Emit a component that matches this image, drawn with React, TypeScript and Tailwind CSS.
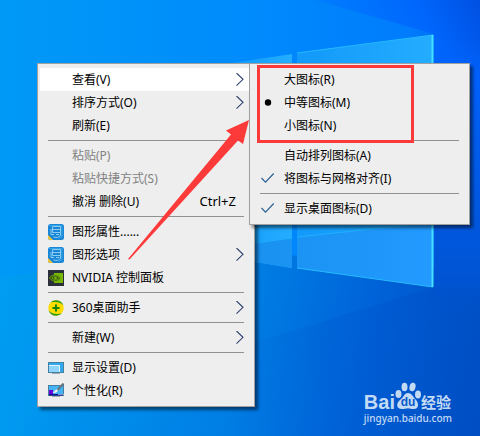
import React from "react";

type Mark = "dot" | "check";
type Entry = {
  label: string;
  icon?: React.ReactNode;
  mark?: Mark;
  shortcut?: string;
  arrow?: boolean;
  disabled?: boolean;
  active?: boolean;
};

function GraphicsIcon() {
  return (
    <svg viewBox="0 0 16 16" className="size-4" aria-hidden="true">
      <rect width="16" height="16" rx="2.5" fill="#1a86d6" />
      <path d="M0 11l5 5H2.500A2.500 2.500 0 0 1 0 13.500z" fill="#f3c433" />
      <path d="M1 1.500h13v11l-3 2" fill="none" stroke="#36a5e8" strokeWidth="1" />
      <path
        d="M4.500 2.500h8v6h-8zM4.500 5.500h8M3 5v5.500h3M12.500 8.500v3l-3 2-4-.5M8 10.500h3"
        fill="none"
        stroke="#9ad4f5"
        strokeWidth="0.9"
      />
    </svg>
  );
}

function NvidiaIcon() {
  return (
    <svg viewBox="0 0 16 16" className="size-4" aria-hidden="true">
      <rect width="16" height="16" fill="#2b303a" />
      <path d="M6 3h9v10H6z" fill="#76b900" />
      <path d="M1.500 8C4 4 9 3.500 13 8 9.500 12.500 4.500 12 1.500 8z" fill="#35501a" stroke="#76b900" strokeWidth="0.8" />
      <path d="M4 8c1.500-3 5-3 7.500 0C9 10.500 6 10.500 4 8z" fill="none" stroke="#76b900" strokeWidth="0.9" />
      <circle cx="7.500" cy="8" r="1.300" fill="#76b900" />
    </svg>
  );
}

function AssistantIcon() {
  return (
    <svg viewBox="0 0 16 16" className="size-4" aria-hidden="true">
      <circle cx="8" cy="8" r="7.700" fill="#ffdc00" />
      <path d="M2.500 2.500C6-.8 13-.8 15.500 5.500 12 2 7.500 1.500 2.500 2.500zM13.500 13.500C10 16.800 3 16.800.5 10.500 4 14 8.500 14.500 13.500 13.500z" fill="#2f9e1b" />
      <path d="M8 4.500v7M4.500 8h7" stroke="#16840f" strokeWidth="2" />
    </svg>
  );
}

function DisplayIcon() {
  return (
    <svg viewBox="0 0 16 16" className="size-4" aria-hidden="true">
      <rect x=".5" y="2.500" width="15" height="10" fill="#35a7ee" stroke="#477f9f" />
      <path d="M1 5h11v7H1z" fill="#8fd5ff" />
      <path d="M1 5.500h10.500V12" fill="none" stroke="#e2f6ff" />
      <path d="M4 13.500h8" stroke="#9aa9b2" />
    </svg>
  );
}

function PersonalizeIcon() {
  return (
    <svg viewBox="0 0 16 16" className="size-4" aria-hidden="true">
      <rect x=".5" y="2.500" width="15" height="10" fill="#43b4f3" stroke="#477f9f" />
      <path d="M1 7h4v5H1z" fill="#6a00df" />
      <path d="M1 11h14v1.500H1z" fill="#17128b" />
      <path d="M10.500 11.500h1m1 0h1m1 0h1" stroke="#fff" />
      <path d="M4 13.500h8" stroke="#9aa9b2" />
      <path d="M15.500.5L9 7.500" stroke="#65717b" strokeWidth="2" />
      <path d="M9.500 6.500c1 1.500 0 3.500-5 3.500 2-1 2-4 5-3.500z" fill="#e8eef2" />
    </svg>
  );
}

function MarkIcon({ mark }: { mark: Mark }) {
  return (
    <svg viewBox="0 0 16 16" className="size-4" aria-hidden="true">
      {mark === "dot" ? (
        <circle cx="8" cy="7.500" r="3.200" fill="#000" />
      ) : (
        <path d="M1.500 7l4 4.200L13.700 2.500" fill="none" stroke="#245c94" strokeWidth="1.100" />
      )}
    </svg>
  );
}

function Chevron() {
  return (
    <svg viewBox="0 0 8 14" className="h-3.5 w-2 shrink-0" fill="none" aria-hidden="true">
      <path d="M.5 0L7 6.300.5 12.600" stroke="#2c3f70" strokeWidth="1.100" />
    </svg>
  );
}

const mainGroups: Entry[][] = [
  [
    { label: "查看(V)", arrow: true, active: true },
    { label: "排序方式(O)", arrow: true },
    { label: "刷新(E)" },
  ],
  [
    { label: "粘贴(P)", disabled: true },
    { label: "粘贴快捷方式(S)", disabled: true },
    { label: "撤消 删除(U)", shortcut: "Ctrl+Z" },
  ],
  [
    { label: "图形属性......", icon: <GraphicsIcon /> },
    { label: "图形选项", icon: <GraphicsIcon />, arrow: true },
    { label: "NVIDIA 控制面板", icon: <NvidiaIcon /> },
  ],
  [{ label: "360桌面助手", icon: <AssistantIcon />, arrow: true }],
  [{ label: "新建(W)", arrow: true }],
  [
    { label: "显示设置(D)", icon: <DisplayIcon /> },
    { label: "个性化(R)", icon: <PersonalizeIcon /> },
  ],
];

const viewGroups: Entry[][] = [
  [{ label: "大图标(R)" }, { label: "中等图标(M)", mark: "dot" }, { label: "小图标(N)" }],
  [{ label: "自动排列图标(A)" }, { label: "将图标与网格对齐(I)", mark: "check" }],
  [{ label: "显示桌面图标(D)", mark: "check" }],
];

function Menu({ groups, label, className }: { groups: Entry[][]; label: string; className: string }) {
  return (
    <div
      role="menu"
      aria-label={label}
      className={`absolute border border-[#a0a0a0] bg-[#eeeeee] px-0.5 py-1 shadow-[3px_3px_3px_rgba(0,0,0,0.5)] ${className}`}
    >
      {groups.map((group, i) => (
        <React.Fragment key={i}>
          {i > 0 && <div role="separator" className="mx-2 my-[3px] h-px bg-[#919191]" />}
          {group.map((item) => (
            <button
              key={item.label}
              type="button"
              role="menuitem"
              disabled={item.disabled}
              className={`flex h-[23px] w-full items-center px-2 text-left text-xs ${
                item.active ? "bg-white" : ""
              } ${item.disabled ? "text-[#828282]" : "text-black"}`}
            >
              <span className="mr-2 size-4 shrink-0">
                {item.icon}
                {item.mark && <MarkIcon mark={item.mark} />}
              </span>
              <span className="flex-1 whitespace-nowrap">{item.label}</span>
              {item.shortcut && <span className="mr-2 text-[13px]">{item.shortcut}</span>}
              {item.arrow && <Chevron />}
            </button>
          ))}
        </React.Fragment>
      ))}
    </div>
  );
}

function Wallpaper() {
  return (
    <svg
      viewBox="0 0 480 436"
      preserveAspectRatio="none"
      className="absolute inset-0 h-full w-full"
      aria-hidden="true"
    >
      <defs>
        <linearGradient id="base" x1="0" y1="0" x2="1" y2="0">
          <stop offset="0" stopColor="#0099f6" />
          <stop offset="0.5" stopColor="#008cfc" />
          <stop offset="0.85" stopColor="#007cfc" />
          <stop offset="1" stopColor="#0060f0" />
        </linearGradient>
        <linearGradient id="low" gradientUnits="userSpaceOnUse" x1="0" y1="300" x2="480" y2="400">
          <stop offset="0" stopColor="#009df2" />
          <stop offset="0.5" stopColor="#007ee4" />
          <stop offset="0.75" stopColor="#0062d8" />
          <stop offset="1" stopColor="#004cc0" />
        </linearGradient>
        <linearGradient id="corner" gradientUnits="userSpaceOnUse" x1="350" y1="60" x2="480" y2="0">
          <stop offset="0" stopColor="#007cff" />
          <stop offset="0.6" stopColor="#0066fc" />
          <stop offset="1" stopColor="#0050e2" />
        </linearGradient>
        <linearGradient id="side" x1="0" y1="0" x2="0" y2="1">
          <stop offset="0" stopColor="#0062fc" stopOpacity="0" />
          <stop offset="0.15" stopColor="#0060fa" />
          <stop offset="0.85" stopColor="#0054d4" />
          <stop offset="1" stopColor="#0054d0" stopOpacity="0" />
        </linearGradient>
        <linearGradient id="beam" gradientUnits="userSpaceOnUse" x1="434" y1="300" x2="220" y2="390">
          <stop offset="0" stopColor="#0050c8" stopOpacity="0.45" />
          <stop offset="1" stopColor="#0058d0" stopOpacity="0" />
        </linearGradient>
        <linearGradient id="pane" x1="0" y1="0" x2="1" y2="0">
          <stop offset="0" stopColor="#1299fa" />
          <stop offset="1" stopColor="#24adff" />
        </linearGradient>
        <linearGradient id="lowPane" x1="0" y1="0" x2="1" y2="0">
          <stop offset="0" stopColor="#1790ee" />
          <stop offset="1" stopColor="#229aff" />
        </linearGradient>
      </defs>
      <rect width="480" height="436" fill="url(#base)" />
      <path d="M0 277L225 250 480 270V436H0z" fill="url(#low)" />
      <path d="M315 0H480V80H434V34z" fill="url(#corner)" />
      <path d="M434 40H480V320H434z" fill="url(#side)" />
      <path d="M434 287L240 347 80 436H480V287z" fill="url(#beam)" />
      <path d="M225 64L292 54V268L225 257z" fill="url(#pane)" />
      <path d="M297 53L433 35V287L297 268z" fill="url(#pane)" />
      <path d="M225 246L292 238V268L225 257zM297 237L410 225H433V287L297 268z" fill="url(#lowPane)" />
      <path d="M255 243L292 238M297 237L410 225" stroke="#1fb0ff" strokeWidth="1" />
      <path d="M297 53L433 35M297 268L433 287" fill="none" stroke="#25baff" strokeWidth="1" />
      <path d="M432.500 35V287" stroke="#45dfff" strokeWidth="2" />
    </svg>
  );
}

function Annotation() {
  return (
    <>
      <div className="pointer-events-none absolute left-[257px] top-[65px] h-[78px] w-[157px] border-3 border-[#fd3a3a]" />
      <svg
        width="121"
        height="140"
        viewBox="128 120 121 140"
        className="pointer-events-none absolute left-[128px] top-[120px]"
        aria-hidden="true"
      >
        <path d="M249 120L226 130.500 231 134.500 128 259 129.500 259.500 238 140.500 243 144z" fill="#fd3a3a" />
      </svg>
    </>
  );
}

function Watermark() {
  return (
    <div className="absolute bottom-2.5 right-7 flex flex-col text-[#c3daf5]">
      <div className="flex items-end">
        <span className="font-['Liberation_Sans',sans-serif] text-xl font-bold leading-4">Bai</span>
        <svg viewBox="0 0 26 28" className="h-7 w-[26px]" aria-hidden="true">
          <g fill="currentColor">
            <ellipse cx="3.500" cy="12" rx="3" ry="4" />
            <ellipse cx="9.500" cy="5" rx="3" ry="4.300" />
            <ellipse cx="17.500" cy="5" rx="3" ry="4.300" transform="rotate(12 17.5 5)" />
            <ellipse cx="23" cy="12.500" rx="3" ry="4" />
            <path d="M13 11c4 0 5 4 8 7s3 9-2 9c-3 0-4-.8-6-.8S9 27 7 27c-6 0-6-6-2-9s4-7 8-7z" />
          </g>
          <text
            x="13"
            y="24"
            textAnchor="middle"
            fill="#0759ca"
            fontFamily="Liberation Sans, sans-serif"
            fontSize="12"
            fontWeight="700"
          >
            du
          </text>
        </svg>
        <span className="text-[15px] font-bold leading-4">经验</span>
      </div>
      <span className="text-[10px] font-medium leading-4">jingyan.baidu.com</span>
    </div>
  );
}

export default function App() {
  return (
    <main className="relative min-h-screen w-full overflow-hidden font-['Noto_Sans','Noto_Sans_CJK_SC',sans-serif]">
      <Wallpaper />
      <Menu groups={mainGroups} label="桌面" className="left-[37px] top-[63px] w-[218px]" />
      <Menu groups={viewGroups} label="查看" className="left-[249px] top-[63px] w-[221px]" />
      <Annotation />
      <Watermark />
    </main>
  );
}
